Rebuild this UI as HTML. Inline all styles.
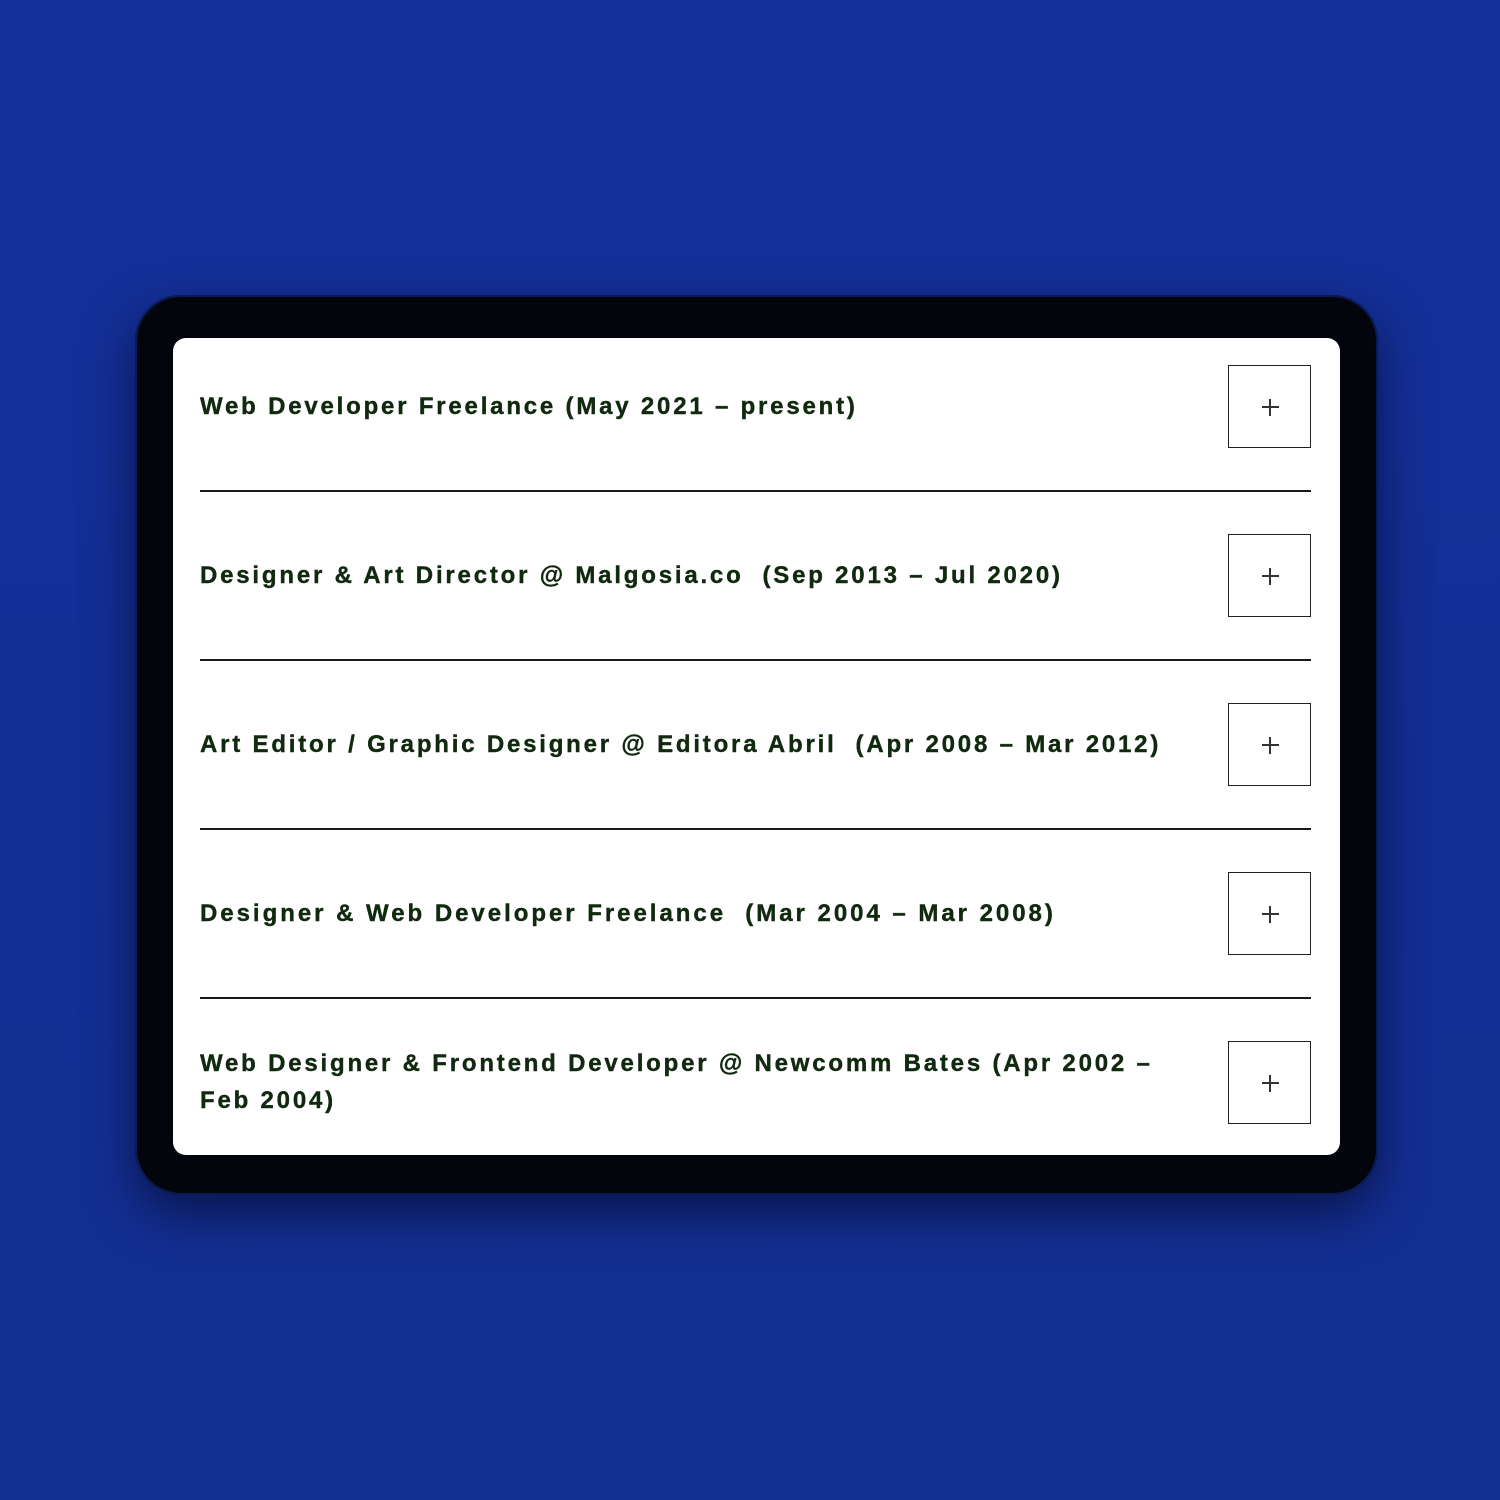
<!DOCTYPE html>
<html><head><style>
html,body{margin:0;padding:0}
body{width:1500px;height:1500px;background:linear-gradient(180deg,#15309a 0%,#132f96 50%,#142f92 100%);position:relative;overflow:hidden;font-family:"Liberation Sans",sans-serif}
.dev{position:absolute;left:135px;top:295px;width:1243px;height:900px;border-radius:46px;background:#03050c;box-shadow:0 20px 50px rgba(0,0,20,.55),inset 0 0 0 2px #0b1a55}
.scr{position:absolute;left:173px;top:338px;width:1167px;height:817px;border-radius:13px;background:#fff;overflow:hidden}
.t{position:absolute;left:27px;width:1000px;font-weight:bold;font-size:24px;letter-spacing:2.8px;color:#10290f;line-height:37px;-webkit-text-stroke:0.4px #10290f;white-space:nowrap}
.b{position:absolute;left:1055px;width:83px;height:83px;border:1.5px solid #222;box-sizing:border-box}
.b:before{content:"";position:absolute;left:33px;top:40px;width:17px;height:2px;background:#333}
.b:after{content:"";position:absolute;left:40px;top:33px;width:2px;height:17px;background:#333}
.l{position:absolute;left:27px;width:1111px;height:2px;background:#1a1a1a}
</style></head><body>
<div class="dev"></div>
<div class="scr">
<div class="t" style="top:50px">Web Developer Freelance (May 2021 – present)</div>
<div class="b" style="top:27px"></div>
<div class="l" style="top:152px"></div>
<div class="t" style="top:219px">Designer &amp; Art Director @ Malgosia.co &nbsp;(Sep 2013 – Jul 2020)</div>
<div class="b" style="top:196px"></div>
<div class="l" style="top:321px"></div>
<div class="t" style="top:388px;letter-spacing:2.8px">Art Editor / Graphic Designer @ Editora Abril &nbsp;(Apr 2008 – Mar 2012)</div>
<div class="b" style="top:365px"></div>
<div class="l" style="top:490px"></div>
<div class="t" style="top:557px;letter-spacing:2.97px">Designer &amp; Web Developer Freelance &nbsp;(Mar 2004 – Mar 2008)</div>
<div class="b" style="top:534px"></div>
<div class="l" style="top:659px"></div>
<div class="t" style="top:707px">Web Designer &amp; Frontend Developer @ Newcomm Bates (Apr 2002 –<br>Feb 2004)</div>
<div class="b" style="top:703px"></div>
</div>
</body></html>
